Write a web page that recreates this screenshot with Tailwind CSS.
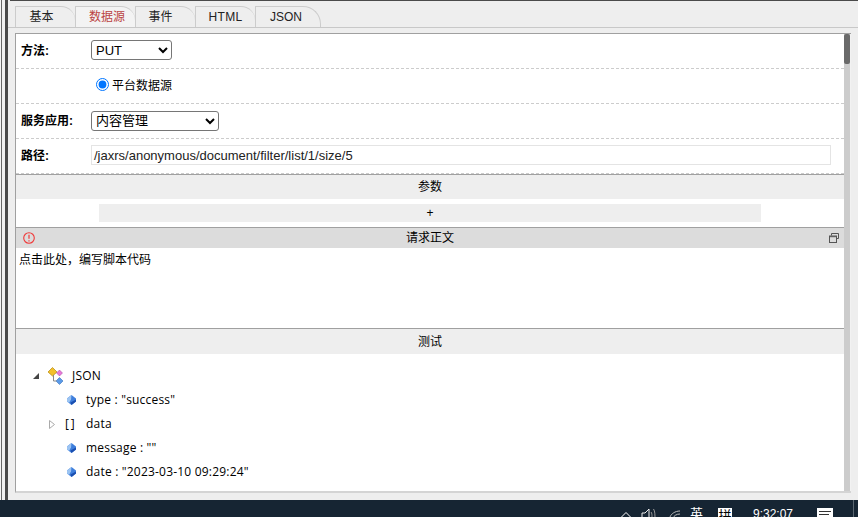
<!DOCTYPE html>
<html>
<head>
<script src="https://cdn.jsdelivr.net/npm/@tailwindcss/browser@4"></script>
</head>
<body class="m-0 w-[858px] h-[517px] overflow-hidden bg-[#eeeeee] font-['Liberation_Sans','Noto_Sans_CJK_SC',sans-serif] text-[12px] text-[#222]">
<div class="relative w-[858px] h-[517px] overflow-hidden flex flex-col">
  <div class="flex-1 min-h-0 flex">
    <div class="w-px bg-[#f4f4f4]"></div>
    <div class="w-px bg-[#666666]"></div>
    <div class="w-[3px] bg-[#f0f0f0]"></div>
    <div class="w-[3px] bg-[#4a4a4a]"></div>
    <div class="flex-1 min-w-0 flex flex-col">
      <div class="h-px ml-[2px] bg-[#4a4a4a]"></div>
      <div class="h-[27px] flex items-end pl-[7px] border-b border-[#c8c8c8] bg-[#eeeeee] shrink-0">
        <div class="w-[60px] h-[21px] border-t border-l border-[#cccccc] rounded-tr-[14px] flex items-center justify-center pr-[8px]">基本</div>
        <div class="w-[60px] h-[21px] border-t border-l border-[#cccccc] rounded-tr-[14px] flex items-center justify-center pl-[3px] text-[#b44] bg-[#f3f3f3]">数据源</div>
        <div class="w-[60px] h-[21px] border-t border-l border-[#cccccc] rounded-tr-[14px] flex items-center justify-center pr-[10px]">事件</div>
        <div class="w-[60px] h-[21px] border-t border-l border-[#cccccc] rounded-tr-[14px] flex items-center justify-center tracking-[0.3px]">HTML</div>
        <div class="w-[66px] h-[21px] border-t border-l border-r border-[#cccccc] rounded-tr-[18px] flex items-center justify-center pr-[4px]">JSON</div>
      </div>
      <div class="h-[5px] shrink-0"></div>
      <div class="flex-1 min-h-0 mx-[7px] mb-[7px] flex border-t border-l border-[#a0a0a0] border-b-2 border-b-[#d4d4d4] bg-white overflow-hidden">
        <div class="flex-1 min-w-0 flex flex-col overflow-hidden">
          <div class="h-[35px] shrink-0 flex items-center border-b border-dashed border-[#cccccc]">
            <div class="w-[75px] pl-[5px] font-bold text-black mb-[1px]">方法:</div>
            <select class="w-[81px] h-[20px] border border-[#767676] rounded-[3px] text-[13px] text-black bg-white mb-[2px]"><option>PUT</option></select>
          </div>
          <div class="h-[35px] shrink-0 flex items-center border-b border-dashed border-[#cccccc] pl-[80px]">
            <input type="radio" checked class="w-[13px] h-[13px] m-0 mb-[4px] accent-[#0075ff]">
            <span class="ml-[3px] text-black">平台数据源</span>
          </div>
          <div class="h-[35px] shrink-0 flex items-center border-b border-dashed border-[#cccccc]">
            <div class="w-[75px] pl-[5px] font-bold text-black">服务应用:</div>
            <select class="w-[128px] h-[20px] border border-[#767676] rounded-[3px] text-[13px] text-black bg-white mb-[1px]"><option>内容管理</option></select>
          </div>
          <div class="h-[35px] shrink-0 flex items-center border-b border-dashed border-[#cccccc]">
            <div class="w-[75px] pl-[5px] font-bold text-black mb-[1px]">路径:</div>
            <div class="w-[740px] h-[20px] border border-[#e4e4e4] pl-[2px] mb-[2px] pt-[1px] flex items-center text-[#222] text-[13px]">/jaxrs/anonymous/document/filter/list/1/size/5</div>
          </div>
          <div class="h-[25px] shrink-0 border-t border-[#a0a0a0] bg-[#eeeeee] flex items-center justify-center text-black">参数</div>
          <div class="h-[28px] shrink-0 bg-white flex items-center pl-[83px]">
            <div class="w-[662px] h-[18px] bg-[#eeeeee] flex items-center justify-center text-black">+</div>
          </div>
          <div class="h-[21px] shrink-0 border-t border-[#a0a0a0] bg-[#dcdcdc] flex items-center justify-center relative text-black">
            <svg class="absolute left-[7px] top-[4px]" width="12" height="12" viewBox="0 0 12 12" fill="none"><circle cx="6" cy="6" r="5.3" stroke="#f03a3a" stroke-width="1.1"/><path d="M6 2.800v4M6 8.200v1.200" stroke="#f03a3a" stroke-width="1.2"/></svg>
            请求正文
            <svg class="absolute right-[5px] top-[5px]" width="10" height="10" viewBox="0 0 10 10" fill="none"><path d="M2.500 2.500V.5h7v5h-2" stroke="#555" stroke-width="1"/><rect x=".5" y="3" width="7" height="6.500" stroke="#555" stroke-width="1"/><path d="M.5 3.700h7" stroke="#555"/></svg>
          </div>
          <div class="h-[80px] shrink-0 pl-[3px] pt-[3px] text-black">点击此处，编写脚本代码</div>
          <div class="h-[26px] shrink-0 border-t border-[#a0a0a0] bg-[#eeeeee] flex items-center justify-center text-black">测试</div>
          <div class="flex-1 min-h-0 overflow-hidden pt-[10px] text-black tracking-[0.2px] font-['Open_Sans','Noto_Sans_CJK_SC',sans-serif]">
            <div class="h-[24px] flex items-center pl-[17px]">
              <svg width="6" height="6" viewBox="0 0 6 6"><path d="M6 0v6H0z" fill="#444"/></svg>
              <svg class="ml-[9px]" width="16" height="18" viewBox="0 0 16 18"><path d="M0 5L4.500 .5 9 5 4.500 9z" fill="#f2c02c" stroke="#b58a10" stroke-width=".7"/><path d="M11.500 3l3 3-3 3-3-3z" fill="#e878d8" stroke="#a040a0" stroke-width=".5"/><path d="M11.500 10.500l3.500 3.500-3.500 3.500L8 14z" fill="#5a9ae8" stroke="#2060b0" stroke-width=".5"/><path d="M5.500 8v6h3" fill="none" stroke="#888"/></svg>
              <span class="ml-[8px]">JSON</span>
            </div>
            <div class="h-[24px] flex items-center pl-[51px]">
              <svg width="9" height="10" viewBox="0 0 9 10"><path d="M4.500 0L9 3.500v3L4.500 10 0 6.500v-3z" fill="#3f7fdc"/><path d="M4.500 0L0 3.500v3L2 8 4 4.500z" fill="#9cc4f2"/><path d="M4.500 10L9 6.500V4.500L3.500 7.500z" fill="#1b4fb0"/></svg>
              <span class="ml-[10px]">type : "success"</span>
            </div>
            <div class="h-[24px] flex items-center pl-[33px]">
              <svg width="6" height="9" viewBox="0 0 6 9"><path d="M.5.500l5 4-5 4z" fill="none" stroke="#aaa"/></svg>
              <span class="ml-[10px] w-[10px] flex justify-between"><span>[</span><span>]</span></span>
              <span class="ml-[11px]">data</span>
            </div>
            <div class="h-[24px] flex items-center pl-[51px]">
              <svg width="9" height="10" viewBox="0 0 9 10"><path d="M4.500 0L9 3.500v3L4.500 10 0 6.500v-3z" fill="#3f7fdc"/><path d="M4.500 0L0 3.500v3L2 8 4 4.500z" fill="#9cc4f2"/><path d="M4.500 10L9 6.500V4.500L3.500 7.500z" fill="#1b4fb0"/></svg>
              <span class="ml-[10px]">message : ""</span>
            </div>
            <div class="h-[24px] flex items-center pl-[51px]">
              <svg width="9" height="10" viewBox="0 0 9 10"><path d="M4.500 0L9 3.500v3L4.500 10 0 6.500v-3z" fill="#3f7fdc"/><path d="M4.500 0L0 3.500v3L2 8 4 4.500z" fill="#9cc4f2"/><path d="M4.500 10L9 6.500V4.500L3.500 7.500z" fill="#1b4fb0"/></svg>
              <span class="ml-[10px]">date : "2023-03-10 09:29:24"</span>
            </div>
            <div class="h-[24px] flex items-center pl-[51px]">
              <svg width="9" height="10" viewBox="0 0 9 10"><path d="M4.500 0L9 3.500v3L4.500 10 0 6.500v-3z" fill="#3f7fdc"/></svg>
              <span class="ml-[10px]">count : "145"</span>
            </div>
          </div>
        </div>
        <div class="w-[6px] bg-[#cccccc] shrink-0">
          <div class="w-[6px] h-[30px] bg-[#6a6a6a] rounded-[2px]"></div>
        </div>
        <div class="w-px bg-[#f2f2f2] shrink-0"></div>
      </div>
    </div>
  </div>
  <div class="h-[17px] shrink-0 bg-[#162533] text-white relative overflow-hidden">
    <svg class="absolute left-[620px] top-[11px]" width="12" height="7" viewBox="0 0 12 7" fill="none"><path d="M1 6.500l5-5 5 5" stroke="#fff" stroke-width="1"/></svg>
    <svg class="absolute left-[641px] top-[8px]" width="16" height="14" viewBox="0 0 16 14" fill="none"><path d="M1 5h3l4-4v12M1 5v8" stroke="#eee"/><path d="M10 4c1 1 1 3 1 5M12.500 1c1.500 2 1.500 6 1.500 10" stroke="#999"/></svg>
    <svg class="absolute left-[669px] top-[10px]" width="12" height="8" viewBox="0 0 12 8" fill="none"><path d="M1 7c1-3 5-6 10-6M4 8c1-2 3-4 7-4" stroke="#bbb"/></svg>
    <span class="absolute left-[690px] top-[5px] text-[13px] leading-[18px]">英</span>
    <div class="absolute left-[718px] top-[8px] w-[14px] h-[16px] bg-white text-black text-[13px] leading-[16px] text-center">拼</div>
    <span class="absolute left-[753px] top-[5px] text-[12px] leading-[18px]">9:32:07</span>
    <div class="absolute left-[817px] top-[8px] w-[16px] h-[15px] bg-white flex flex-col gap-[2px] pt-[3px] pl-[2px]">
      <div class="w-[12px] h-px bg-[#333]"></div>
      <div class="w-[10px] h-px bg-[#333]"></div>
    </div>
    <div class="absolute left-[853px] top-0 w-px h-[17px] bg-[#5a6670]"></div>
  </div>
</div>
</body>
</html>
